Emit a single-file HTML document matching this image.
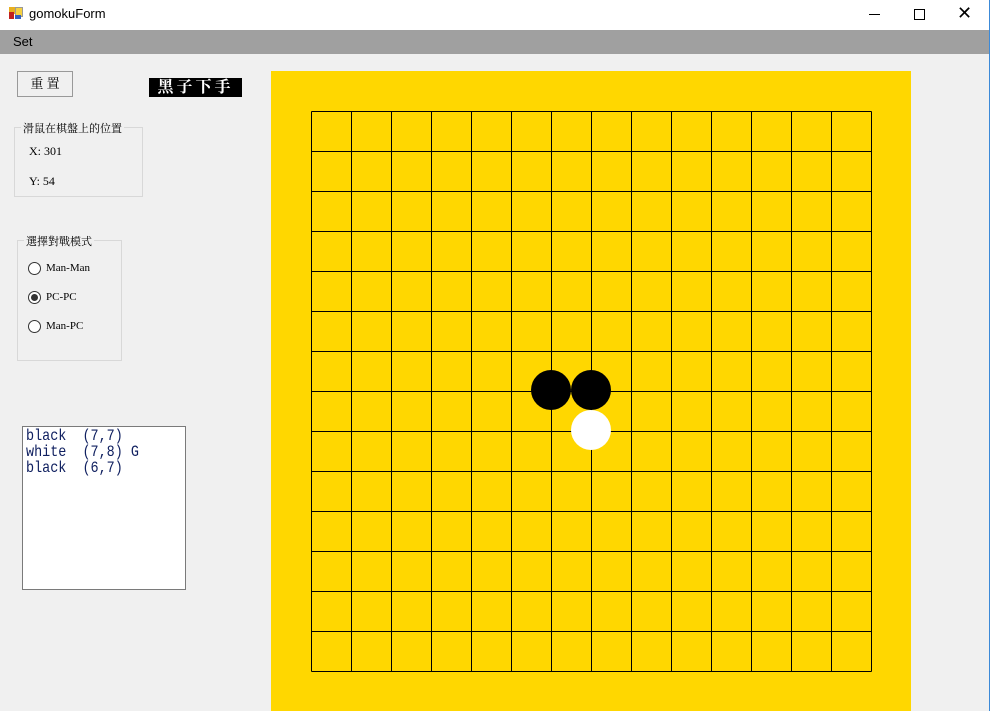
<!DOCTYPE html>
<html><head><meta charset="utf-8"><style>
body{margin:0;width:990px;height:711px;overflow:hidden;background:#f0f0f0;position:relative;font-family:"Liberation Serif","Noto Serif CJK SC",serif;}
.a{position:absolute}
.title{left:0;top:0;width:990px;height:30px;background:#fff;}
.menu{left:0;top:30px;width:990px;height:24px;background:#a0a0a0;}
.ui{font-family:"Segoe UI","Liberation Sans",sans-serif;font-size:13px;color:#000}
.fs{border:1px solid #d8d8d8;}
.leg{background:#f0f0f0;font-size:11px;padding:0 2px;color:#000}
.rad{width:11px;height:11px;border:1px solid #333;border-radius:50%;background:#fff}
</style></head><body>
<div class="a title"></div>
<div class="a" style="left:9px;top:7px;width:7px;height:7px;background:#e8b020"></div>
<div class="a" style="left:15px;top:7px;width:6px;height:8px;background:#f5d040;border:1px solid #999"></div>
<div class="a" style="left:9px;top:12px;width:5px;height:7px;background:#c02020"></div>
<div class="a" style="left:15px;top:15px;width:6px;height:4px;background:#3060c0"></div>
<div class="a ui" style="left:29px;top:6px;font-size:13px">gomokuForm</div>
<div class="a" style="left:869px;top:14px;width:11px;height:1px;background:#000"></div>
<div class="a" style="left:914px;top:9px;width:9px;height:9px;border:1px solid #000"></div>
<div class="a ui" style="left:957px;top:3px;font-size:18px">&#10005;</div>
<div class="a menu"></div>
<div class="a ui" style="left:13px;top:34px">Set</div>
<div class="a" style="left:17px;top:71px;width:54px;height:24px;border:1px solid #999;background:#f0f0f0;font-size:13px;text-align:center;line-height:24px">重 置</div>
<div class="a" style="left:149px;top:78px;width:93px;height:19px;background:#000;color:#fff;font-size:16px;line-height:19px;text-align:center;letter-spacing:3px;font-weight:bold">黑子下手</div>
<div class="a fs" style="left:14px;top:127px;width:127px;height:68px"></div>
<div class="a leg" style="left:21px;top:120px">滑鼠在棋盤上的位置</div>
<div class="a" style="left:29px;top:144px;font-size:12px">X: 301</div>
<div class="a" style="left:29px;top:174px;font-size:12px">Y: 54</div>
<div class="a fs" style="left:17px;top:240px;width:103px;height:119px"></div>
<div class="a leg" style="left:24px;top:233px">選擇對戰模式</div>
<div class="a rad" style="left:28px;top:262px"></div>
<div class="a" style="left:46px;top:262px;font-size:11px">Man-Man</div>
<div class="a rad" style="left:28px;top:291px"></div>
<div class="a" style="left:31px;top:294px;width:7px;height:7px;border-radius:50%;background:#333"></div>
<div class="a" style="left:46px;top:291px;font-size:11px">PC-PC</div>
<div class="a rad" style="left:28px;top:320px"></div>
<div class="a" style="left:46px;top:320px;font-size:11px">Man-PC</div>
<div class="a" style="left:22px;top:426px;width:162px;height:162px;border:1px solid #7a7a7a;background:#fff"></div>
<div class="a" style="left:26px;top:428px;font-family:'Liberation Mono',monospace;font-size:16px;line-height:16px;color:#102060;white-space:pre;transform:scaleX(0.84);transform-origin:0 0">black  (7,7)
white  (7,8) G
black  (6,7)</div>
<svg class="a" style="left:271px;top:71px" width="640" height="640">
<rect width="640" height="640" fill="#ffd700"/>
<g stroke="#000" stroke-width="1">
<path d="M40.5 40.5V600.5M80.5 40.5V600.5M120.5 40.5V600.5M160.5 40.5V600.5M200.5 40.5V600.5M240.5 40.5V600.5M280.5 40.5V600.5M320.5 40.5V600.5M360.5 40.5V600.5M400.5 40.5V600.5M440.5 40.5V600.5M480.5 40.5V600.5M520.5 40.5V600.5M560.5 40.5V600.5M600.5 40.5V600.5"/>
<path d="M40.5 40.5H600.5M40.5 80.5H600.5M40.5 120.5H600.5M40.5 160.5H600.5M40.5 200.5H600.5M40.5 240.5H600.5M40.5 280.5H600.5M40.5 320.5H600.5M40.5 360.5H600.5M40.5 400.5H600.5M40.5 440.5H600.5M40.5 480.5H600.5M40.5 520.5H600.5M40.5 560.5H600.5M40.5 600.5H600.5"/>
</g>
<circle cx="280" cy="319" r="20" fill="#000"/>
<circle cx="320" cy="319" r="20" fill="#000"/>
<circle cx="320" cy="359" r="20" fill="#fff"/>
</svg>
<div class="a" style="left:989px;top:0;width:1px;height:711px;background:#3c8ad8"></div>
</body></html>
